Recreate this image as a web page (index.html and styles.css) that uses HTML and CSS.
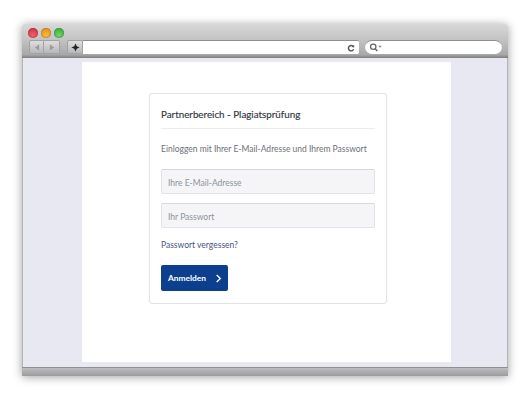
FILE: index.html
```html
<!DOCTYPE html>
<html lang="de">
<head>
    <meta charset="UTF-8">
    <title>Partnerbereich</title>
    <link rel="stylesheet" href="styles.css">
</head>
<body>
    <div class="window">
        <div class="toolbar">
            <div class="lights">
                <span class="light red"></span>
                <span class="light orange"></span>
                <span class="light green"></span>
            </div>
            <div class="nav">
                <span class="nav-btn back"><svg width="6" height="7" viewBox="0 0 7 8"><path d="M6 0.5V7.5L1 4Z" fill="#9a9a9a"/></svg></span>
                <span class="nav-btn forward"><svg width="6" height="7" viewBox="0 0 7 8"><path d="M1 0.5V7.5L6 4Z" fill="#9a9a9a"/></svg></span>
                <span class="nav-btn add"><svg width="9" height="9" viewBox="0 0 11 11"><path d="M5.5 0.5L7 4L10.5 5.5L7 7L5.5 10.5L4 7L0.5 5.5L4 4Z" fill="#222"/></svg></span>
                <div class="url">
                    <svg width="8" height="8" viewBox="0 0 10 10"><path d="M8 3.2A3.4 3.4 0 1 0 8.3 6.6" fill="none" stroke="#555" stroke-width="1.8"/><path d="M5.8 3.6L9 0.8V4.4Z" fill="#555"/></svg>
                </div>
                <div class="search">
                    <svg width="13" height="9" viewBox="0 0 14 10"><circle cx="4.5" cy="4.2" r="3" fill="none" stroke="#666" stroke-width="1.4"/><path d="M6.6 6.4L9 9" stroke="#666" stroke-width="1.6"/><path d="M10 3H14L12 5.4Z" fill="#888"/></svg>
                </div>
            </div>
        </div>
        <div class="content">
            <div class="page">
                <div class="card">
                    <h2>Partnerbereich - Plagiatsprüfung</h2>
                    <p class="intro">Einloggen mit Ihrer E-Mail-Adresse und Ihrem Passwort</p>
                    <form class="login">
                        <input type="text" placeholder="Ihre E-Mail-Adresse">
                        <input type="password" placeholder="Ihr Passwort">
                        <a href="#" class="forgot">Passwort vergessen?</a>
                        <button type="button">Anmelden <svg width="7" height="9" viewBox="0 0 7 10"><path d="M1.5 1L5.5 5L1.5 9" fill="none" stroke="#fff" stroke-width="1.5"/></svg></button>
                    </form>
                </div>
            </div>
        </div>
        <div class="statusbar"></div>
    </div>
</body>
</html>
```

FILE: styles.css
```css
html, body {
    height: 100%;
}
body {
    margin: 0;
    padding: 24px 22px 32px;
    box-sizing: border-box;
    background: #fff;
    font-family: Lato, 'Open Sans', sans-serif;
    overflow: hidden;
}
.window {
    width: 486px;
    height: 352px;
    display: flex;
    flex-direction: column;
    border-radius: 3px 3px 0 0;
    box-shadow: 0 1px 10px rgba(0,0,0,0.38);
}
.toolbar {
    height: 34px;
    flex: none;
    box-sizing: border-box;
    padding: 3px 6px 0 6px;
    background: linear-gradient(180deg, #d8d8d8 0%, #c4c4c4 45%, #a8a8a8 90%, #7e7e7e 100%);
    border-radius: 3px 3px 0 0;
}
.lights {
    display: flex;
    gap: 3px;
    padding-top: 1px;
}
.light {
    width: 10px;
    height: 10px;
    border-radius: 50%;
    box-shadow: inset 0 0 1px rgba(0,0,0,0.6);
}
.red { background: radial-gradient(circle at 50% 70%, #f2606e, #cf2236); }
.orange { background: radial-gradient(circle at 50% 70%, #fbb93f, #e28208); }
.green { background: radial-gradient(circle at 50% 70%, #6fd668, #25a033); }
.nav {
    display: flex;
    align-items: center;
    margin: 2px 0 0 1px;
}
.nav-btn {
    height: 14px;
    width: 15px;
    display: flex;
    align-items: center;
    justify-content: center;
    background: linear-gradient(180deg, #dedede, #b8b8b8);
    border: 1px solid #a2a2a2;
    box-sizing: border-box;
}
.back {
    border-radius: 2px 0 0 2px;
}
.forward {
    width: 16px;
    border-left: none;
    border-radius: 0 2px 2px 0;
}
.add {
    width: 16px;
    margin-left: 7px;
    border-radius: 2px 0 0 2px;
}
.url {
    width: 276px;
    height: 14px;
    box-sizing: border-box;
    background: #fff;
    border-top: 1px solid #8e8e8e;
    border-radius: 0 2px 2px 0;
    display: flex;
    align-items: center;
    justify-content: flex-end;
    padding-right: 4px;
}
.search {
    width: 137px;
    height: 14px;
    margin-left: 6px;
    box-sizing: border-box;
    background: #fff;
    border-top: 1px solid #8e8e8e;
    border-radius: 7px;
    display: flex;
    align-items: center;
    padding-left: 4px;
}
.content {
    flex: 1;
    background: #e8e8f2;
    padding: 4px 56px 5px 59px;
    display: flex;
    border-left: 1px solid #b4b4b4;
    border-right: 1px solid #b4b4b4;
    box-sizing: border-box;
    min-height: 0;
}
.page {
    flex: 1;
    background: #fff;
    padding: 31px 0 0 3px;
    display: flex;
    justify-content: center;
}
.card {
    width: 238px;
    height: 211px;
    box-sizing: border-box;
    border: 1px solid #e3e3e6;
    border-radius: 3px;
    padding: 0 11px;
}
.card h2 {
    margin: 0;
    height: 35px;
    padding-top: 13px;
    box-sizing: border-box;
    border-bottom: 1px solid #ececef;
    font-size: 9.8px;
    line-height: 14px;
    font-weight: 400;
    color: #33363f;
    -webkit-text-stroke: 0.15px #33363f;
}
.intro {
    margin: 14px 0 0;
    font-size: 8.5px;
    line-height: 13px;
    color: #6d7079;
    white-space: nowrap;
}
.login {
    margin-top: 13px;
    display: flex;
    flex-direction: column;
    align-items: flex-start;
}
.login input {
    width: 100%;
    height: 25px;
    box-sizing: border-box;
    margin: 0 0 9px;
    padding: 2px 6px 0;
    border: 1px solid #e2e2e8;
    border-top-color: #d6d6de;
    border-radius: 2px;
    background: #f5f5f8;
    font-family: inherit;
    font-size: 8.5px;
    outline: none;
}
.login input::placeholder {
    color: #8c929a;
    opacity: 1;
}
.forgot {
    margin-top: 2px;
    font-size: 8.5px;
    line-height: 13px;
    color: #47528a;
    text-decoration: none;
}
.login button {
    margin-top: 13px;
    width: 67px;
    height: 26px;
    box-sizing: border-box;
    padding: 0 6px 0 7px;
    display: flex;
    align-items: center;
    justify-content: space-between;
    border: none;
    border-radius: 2px;
    background: #0d3f8f;
    color: #fff;
    font-family: inherit;
    font-size: 8.4px;
    font-weight: 700;
}
.statusbar {
    height: 9px;
    flex: none;
    background: linear-gradient(180deg, #bdbdc0, #9c9c9f);
    border-top: 1px solid #8f8f8f;
    box-sizing: border-box;
}
```
